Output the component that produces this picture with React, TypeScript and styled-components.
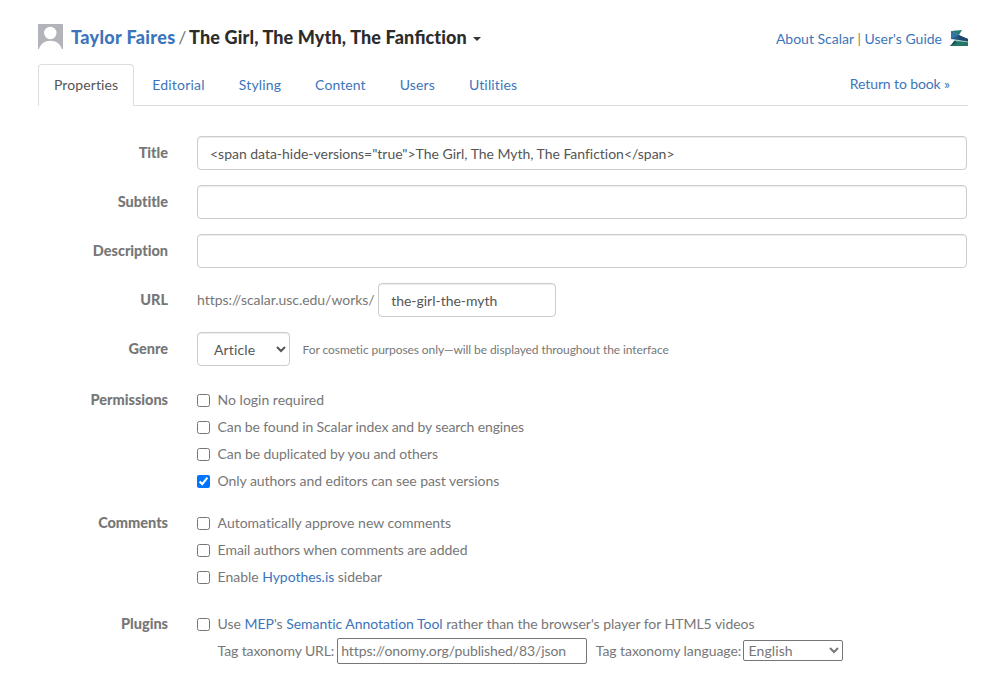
import React from "react";
import styled, { createGlobalStyle } from "styled-components";

const GlobalStyle = createGlobalStyle`
  * { box-sizing: border-box; }
  body {
    margin: 0;
    background: #fff;
    color: #777;
    font: 14px/20px Lato, "Liberation Sans", sans-serif;
    font-variant-ligatures: none;
  }
  input, select { font-family: inherit; font-size: 14px; font-variant-ligatures: none; }
`;

const Page = styled.main`
  width: 987px;
  height: 675px;
  padding: 22px 19px 0 38px;
  overflow: hidden;
`;
const Header = styled.header`
  display: flex;
  align-items: flex-start;
  height: 42px;
`;
const Avatar = styled.svg`
  width: 25px;
  height: 25px;
  margin: 2px 8px 0 0;
  flex: none;
`;
const BookTitle = styled.h1`
  display: flex;
  align-items: center;
  gap: 2.7px;
  margin: 0;
  padding-top: 3px;
  font-size: 18px;
  line-height: 24px;
  font-weight: 900;
  letter-spacing: 0.14px;
  color: #2c2c2c;
  white-space: nowrap;
`;
const Ligature = styled.span`
  font-variant-ligatures: common-ligatures;
  letter-spacing: 0;
`;
const Slash = styled.span`
  font-weight: 400;
  color: #777;
`;
const Link = styled.a`
  color: #3c75bb;
  text-decoration: none;
`;
const AuthorLink = styled(Link)`
  letter-spacing: 0.33px;
`;
const Caret = styled.span`
  margin: 3px 0 0 3px;
  border: 4px solid transparent;
  border-top-color: #333;
  border-bottom: 0;
`;
const HelpLinks = styled.nav`
  display: flex;
  align-items: center;
  gap: 3.5px;
  margin-left: auto;
  padding-top: 7px;
  white-space: nowrap;
`;
const Divider = styled.span`
  color: #a7763d;
`;
const Logo = styled.svg`
  width: 18px;
  height: 17px;
  margin: -2px 0 0 4.5px;
`;
const TabBar = styled.nav`
  display: flex;
  height: 42px;
  width: 930px;
  border-bottom: 1px solid #ddd;
`;
const Tab = styled.a<{ $active?: boolean; $spacing: number }>`
  height: 42px;
  margin-right: 2px;
  padding: 10px 15px;
  border: 1px solid transparent;
  border-color: ${(p) => (p.$active ? "#ddd #ddd #fff" : "transparent")};
  border-radius: 4px 4px 0 0;
  background: ${(p) => (p.$active ? "#fff" : "none")};
  color: ${(p) => (p.$active ? "#555" : "#3c75bb")};
  letter-spacing: ${(p) => p.$spacing}px;
`;
const ReturnLink = styled(Link)`
  margin: 10px 18px 0 auto;
  letter-spacing: -0.11px;
`;
const Form = styled.form`
  display: grid;
  grid-template-columns: 130px 770px;
  column-gap: 29px;
  padding-top: 30px;
`;
const Label = styled.div<{ $top?: number }>`
  padding-top: ${(p) => p.$top ?? 7}px;
  font-size: 14.5px;
  font-weight: 900;
  letter-spacing: -0.02px;
  text-align: right;
`;
const Field = styled.div`
  display: flex;
  align-items: center;
  height: 34px;
  margin-bottom: 15px;
  white-space: pre;
`;
const UrlPrefix = styled.span`
  letter-spacing: -0.035px;
`;
const TextInput = styled.input<{ $width?: number }>`
  width: ${(p) => p.$width ?? 770}px;
  height: 34px;
  padding: 6px 12px;
  border: 1px solid #ccc;
  border-radius: 4px;
  background: #fff;
  box-shadow: inset 0 1px 1px rgba(0, 0, 0, 0.075);
  color: #555;
  letter-spacing: -0.02px;
  outline: 0;
`;
const GenreSelect = styled.select`
  width: 93px;
  height: 34px;
  margin-right: 12.6px;
  padding: 6px 1px 6px 12px;
  border: 1px solid #ccc;
  border-radius: 4px;
  background: #fff;
  box-shadow: inset 0 1px 1px rgba(0, 0, 0, 0.075);
  color: #555;
  letter-spacing: 0.15px;
`;
const Hint = styled.small`
  font-size: 12px;
  padding-top: 2px;
  letter-spacing: -0.085px;
`;
const Group = styled.div<{ $bottom: number }>`
  display: flex;
  flex-direction: column;
  gap: 7px;
  padding: 9px 0 ${(p) => p.$bottom}px;
`;
const CheckRow = styled.label<{ $spacing?: number }>`
  display: flex;
  height: 20px;
  letter-spacing: ${(p) => p.$spacing ?? 0}px;
  white-space: pre;
`;
const Checkbox = styled.input.attrs({ type: "checkbox" })`
  width: 13px;
  height: 13px;
  margin: 4px 7.6px 0 0;
`;
const PluginRow = styled.div`
  display: flex;
  align-items: center;
  height: 26px;
  margin: -3px 0 0 20.6px;
  white-space: pre;
`;
const PluginText = styled.span<{ $spacing: number }>`
  letter-spacing: ${(p) => p.$spacing}px;
`;
const TaxonomyInput = styled.input`
  width: 250px;
  height: 26px;
  margin: 0 8.5px 0 3px;
  padding: 0 3px 2px;
  border: 1px solid #767676;
  border-radius: 2px;
  color: #777;
  letter-spacing: -0.11px;
`;
const LanguageSelect = styled.select`
  width: 100px;
  height: 21px;
  margin: -1px 0 0 2.2px;
  padding: 0;
  border: 1px solid #767676;
  border-radius: 2px;
  background: #fff;
  color: #777;
  letter-spacing: 0.12px;
`;

const tabs = [
  { name: "Editorial", spacing: 0.22 },
  { name: "Styling", spacing: 0.14 },
  { name: "Content", spacing: 0.08 },
  { name: "Users", spacing: 0.14 },
  { name: "Utilities", spacing: 0.16 },
];
const permissions = [
  { text: "No login required", spacing: 0 },
  { text: "Can be found in Scalar index and by search engines", spacing: -0.12 },
  { text: "Can be duplicated by you and others", spacing: -0.09 },
  { text: "Only authors and editors can see past versions", spacing: -0.065, checked: true },
];

export default function App() {
  return (
    <>
      <GlobalStyle />
      <Page>
        <Header>
          <Avatar viewBox="0 0 25 25">
            <path fill="#b3b4b9" d="M0 0h25v25H0z" />
            <circle cx="12.3" cy="9" r="6.2" fill="#fff" />
            <path fill="#fff" d="M1 25c1.2-5 5.8-8.3 11.4-8.3S22.5 20 23.8 25z" />
          </Avatar>
          <BookTitle>
            <AuthorLink>Taylor Faires</AuthorLink>
            <Slash>/</Slash>
            <span>The Girl, The Myth, The Fan<Ligature>fi</Ligature>ction</span>
            <Caret />
          </BookTitle>
          <HelpLinks>
            <Link>About Scalar</Link>
            <Divider>|</Divider>
            <Link>User's Guide</Link>
            <Logo viewBox="0 0 18 17">
              <path fill="#237b78" d="M1 1 12 0 9 5z" />
              <path fill="#24577f" d="m1 1 8 4 9 4v3L1 9z" />
              <path fill="#3476a5" d="M1 2v7l8-4z" />
              <path fill="#1c4870" d="m8 5 10 4v3l-8-2z" />
              <path fill="#164d58" d="m0 16 5-6 5 6z" />
              <path fill="#329078" d="m5 10 13 2v4h-8z" />
              <path fill="#237565" d="m0 16 8-4 10 0v4z" />
              <path stroke="#d6eaed" strokeWidth=".6" fill="none" d="m1 9.4 17 2.5" />
            </Logo>
          </HelpLinks>
        </Header>
        <TabBar>
          <Tab $active $spacing={0.1}>Properties</Tab>
          {tabs.map((tab) => (
            <Tab key={tab.name} $spacing={tab.spacing}>{tab.name}</Tab>
          ))}
          <ReturnLink>Return to book »</ReturnLink>
        </TabBar>
        <Form>
          <Label>Title</Label>
          <Field>
            <TextInput defaultValue={'<span data-hide-versions="true">The Girl, The Myth, The Fanfiction</span>'} />
          </Field>
          <Label>Subtitle</Label>
          <Field><TextInput /></Field>
          <Label>Description</Label>
          <Field><TextInput /></Field>
          <Label>URL</Label>
          <Field>
            <UrlPrefix>https://scalar.usc.edu/works/ </UrlPrefix>
            <TextInput $width={178} defaultValue="the-girl-the-myth" />
          </Field>
          <Label>Genre</Label>
          <Field>
            <GenreSelect><option>Article</option></GenreSelect>
            <Hint>For cosmetic purposes only—will be displayed throughout the interface</Hint>
          </Field>
          <Label $top={9}>Permissions</Label>
          <Group $bottom={13}>
            {permissions.map((item) => (
              <CheckRow key={item.text} $spacing={item.spacing}>
                <Checkbox defaultChecked={item.checked} />
                <span>{item.text}</span>
              </CheckRow>
            ))}
          </Group>
          <Label $top={9}>Comments</Label>
          <Group $bottom={18}>
            <CheckRow $spacing={-0.01}><Checkbox /><span>Automatically approve new comments</span></CheckRow>
            <CheckRow $spacing={-0.06}><Checkbox /><span>Email authors when comments are added</span></CheckRow>
            <CheckRow $spacing={-0.03}><Checkbox /><span>Enable <Link>Hypothes.is</Link> sidebar</span></CheckRow>
          </Group>
          <Label $top={9}>Plugins</Label>
          <Group $bottom={0}>
            <CheckRow $spacing={-0.03}>
              <Checkbox />
              <span>Use <Link>MEP</Link>'s <Link>Semantic Annotation Tool</Link> rather than the browser's player for HTML5 videos</span>
            </CheckRow>
            <PluginRow>
              <PluginText $spacing={-0.1}>Tag taxonomy URL:</PluginText>
              <TaxonomyInput defaultValue="https://onomy.org/published/83/json" />
              <PluginText $spacing={-0.06}>Tag taxonomy language:</PluginText>
              <LanguageSelect><option>English</option></LanguageSelect>
            </PluginRow>
          </Group>
        </Form>
      </Page>
    </>
  );
}
